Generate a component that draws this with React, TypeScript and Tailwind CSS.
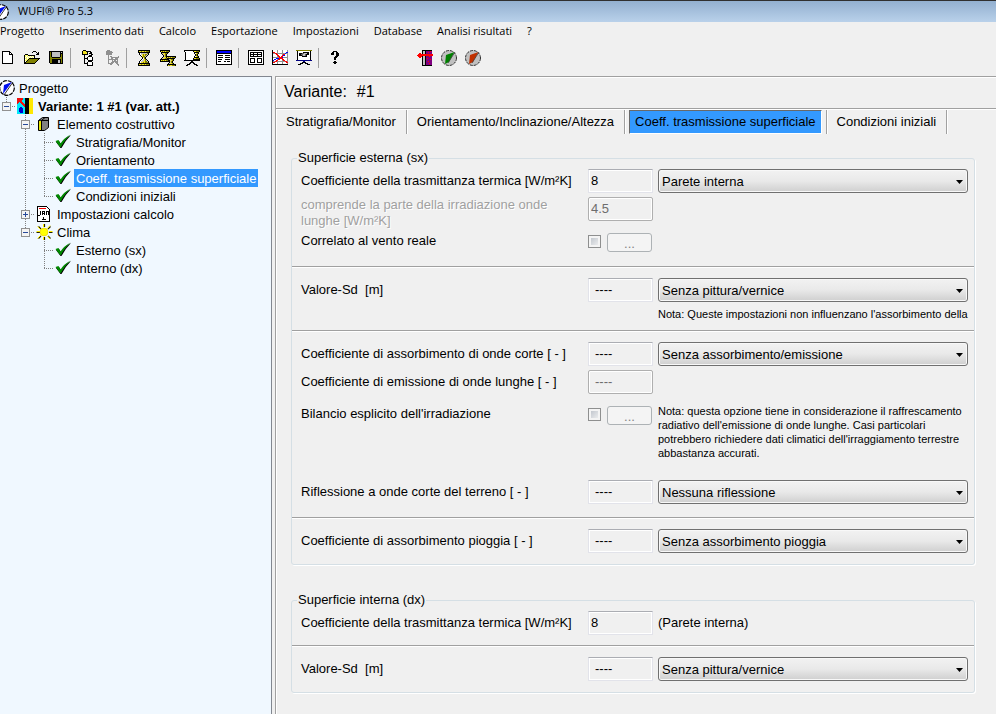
import { ReactNode, useState } from "react";
import clsx from "clsx";

const palette: Record<string, string> = {
  "#": "#000000",
  w: "#ffffff",
  y: "#ffff66",
  Y: "#f0e020",
  o: "#808000",
  g: "#909090",
  s: "#c0c0c0",
  d: "#606060",
  b: "#0000ff",
  n: "#000080",
  r: "#ff0000",
  p: "#800080",
};

// small bitmap icons, one character per pixel
function Pixels({ rows }: { rows: string[] }) {
  return (
    <svg width="16" height="16" viewBox="0 0 16 16" shapeRendering="crispEdges">
      {rows.map((row, y) =>
        row
          .split("")
          .map((c, x) =>
            palette[c] ? (
              <rect key={x + "-" + y} x={x} y={y} width="1" height="1" fill={palette[c]} />
            ) : null
          )
      )}
    </svg>
  );
}

const newIcon = [
  "................",
  "..########......",
  "..#wwwwww##.....",
  "..#wwwwww#w#....",
  "..#wwwwww####...",
  "..#wwwwwwwww#...",
  "..#wwwwwwwww#...",
  "..#wwwwwwwww#...",
  "..#wwwwwwwww#...",
  "..#wwwwwwwww#...",
  "..#wwwwwwwww#...",
  "..#wwwwwwwww#...",
  "..#wwwwwwwww#...",
  "..###########...",
];

const openIcon = [
  "................",
  ".........###....",
  "........#...#.#.",
  ".............##.",
  ".###........###.",
  "#yyy#######.....",
  "#ywywywywy#.....",
  "#wywywywyw#.....",
  "#yywy###########",
  "#wyy#ooooooooo#.",
  "#yy#ooooooooo#..",
  "#w#ooooooooo#...",
  "##ooooooooo#....",
  "###########.....",
];

const saveIcon = [
  "................",
  ".##############.",
  ".#o#ssssssss#s#.",
  ".#o#ssssssss###.",
  ".#o#ssssssss#o#.",
  ".#o#ssssssss#o#.",
  ".#o#ssssssss#o#.",
  ".#oo########oo#.",
  ".#oooooooooooo#.",
  ".#oo#########o#.",
  ".#oo######ss#o#.",
  ".#oo######ss#o#.",
  ".#oo######ss#o#.",
  "..#############.",
];

const treeIcon = [
  "...###..........",
  "..#YYY#####.....",
  "..#YYYY#..##....",
  "..#YYYY#.###....",
  "..######...##...",
  "....#....###....",
  "....#...####....",
  "....#..#wwww#...",
  "....####wwww#...",
  "....#..#wwww#...",
  "....#...#####...",
  "....#...####....",
  "....#..#wwww#...",
  "....####wwww#...",
  ".......#wwww#...",
  ".......######...",
];

const treeOffIcon = [
  "...ggg..........",
  "..gggggg........",
  "..ggggggg.......",
  "..gggggg........",
  "..gggggg........",
  "....g...........",
  "....g.gg......g.",
  "....g..gggggggg.",
  "....g..gg.wggg..",
  "....gggggggggg..",
  "....g...g.gg.g..",
  "....g...gggggg..",
  "....g..ggg.ggg..",
  "....ggggg...gg..",
  "......gg.....gg.",
  "..............g.",
];

const hourglassIcon = [
  "..############..",
  "..#YYoYYoYooo#..",
  "..############..",
  "...#wsssssso#...",
  "...#wsYoYoos#...",
  "....#wYoYos#....",
  ".....#Yoos#.....",
  "......#Yo#......",
  "......#wo#......",
  ".....#wsYo#.....",
  "....#wssYos#....",
  "...#wssYYoos#...",
  "...#wYYoYooo#...",
  "..############..",
  "..#YYoYYoYooo#..",
  "..############..",
];

const hourglassesIcon = [
  "##########......",
  "#YoYoYooo#......",
  ".########.......",
  ".#sYYoo#........",
  "..#sYo#.........",
  "...#Yo#.........",
  "...#so##########",
  "..#sYY#YoYoYooo#",
  ".#sYYoo########.",
  "#########sYoo#..",
  "#YoYoYoo##sYo#..",
  "##########Yo#...",
  ".........#so#...",
  "........#sYYo#..",
  ".......#########",
  ".......#YoYYooo#",
];

const screenIcon = [
  "################",
  "#wwwwwwww#YYooo#",
  ".#wwwwwwww#####.",
  ".#wwwwwwww#wYo#.",
  ".#wwwwwwwww#o#..",
  ".#wwwwwwwww#o#..",
  ".#wwwwwwww#wYo#.",
  ".#wwwwwwww#####.",
  ".#wwwwwww#YYooo#",
  ".#wwwwwww#######",
  "################",
  ".......##.......",
  "......####......",
  ".....##..##.....",
  "...###....###...",
  "..##........##..",
];

const dialogIcon = [
  "################",
  "#bbbbbbbbbbbbbb#",
  "#bbbbbbbbbbbbbb#",
  "################",
  "#wwwwwwwwwwwwww#",
  "#w#####ww#####w#",
  "#wwwwwwwwwwwwww#",
  "#w#####ww#####w#",
  "#wwwwwwwwwwwwww#",
  "#w####www#####w#",
  "#wwwwwwwwwwwwww#",
  "#w###www##w###w#",
  "#wwwwwwwwwwwwww#",
  "#wwwwwwwwwwwwww#",
  "################",
];

const gridIcon = [
  "################",
  "#wwwwwwwwwwwwww#",
  "#w############w#",
  "#w#ww#www#www#w#",
  "#w############w#",
  "#w#ww#www#www#w#",
  "#w############w#",
  "#wwwwwwwwwwwwww#",
  "#w#####ww#####w#",
  "#w#www#ww#www#w#",
  "#w#www#ww#www#w#",
  "#w#www#ww#www#w#",
  "#w#####ww#####w#",
  "#wwwwwwwwwwwwww#",
  "################",
];

const chartIcon = [
  "#wwwwgwwwwgwwwwg",
  "#wwwwgwwwwgwwwwg",
  "#rrwwgwwwwgwwwbb",
  "#ggrrggggggggbgg",
  "#wwwrrwwwwgrrwwg",
  "#wwwwrrwwwrbbwwg",
  "#wwwwgrrwrrwwwwg",
  "#ggggggrrrbggggg",
  "#wwwbbbrrrrwwwwg",
  "#wbbwgrrwwrrwwwg",
  "#bwwrrwwwwgrrwwg",
  "#ggrrggggggggrrg",
  "#rrwwgwwwwgwwwrr",
  "#wwwwgwwwwgwwwwg",
  "################",
];

const presentIcon = [
  "oooooooooooooooo",
  ".#wwwwwwwwwwww#.",
  ".#wwwww######w#.",
  ".#w###ddsss##w#.",
  ".#w##ddssd###w#.",
  ".#w###dssd#www#.",
  ".#wwww#####www#.",
  ".#wwwwwwwwwwww#.",
  ".#wwwwwwwwwwww#.",
  ".#wwwwwwwwwwww#.",
  "nnnnnnnnnnnnnnnn",
  ".......nn.......",
  "......####......",
  "....###..###....",
  "..###......###..",
];

const helpIcon = [
  "................",
  ".....####.......",
  "....##..##......",
  "...###..###.....",
  "...###..###.....",
  "........###.....",
  ".......###......",
  "......###.......",
  "......##........",
  "......##........",
  "................",
  "......##........",
  ".....####.......",
  "......##........",
];

const wallIcon = [
  ".....##########.",
  ".....#ss#pppprp.",
  ".....#ss#pprppp.",
  "..rr.#ss#pppppp.",
  ".rrrrrrrrrrrrrrr",
  "rrrrrrrrrrrrrrrr",
  ".rrrr#ss#ppprpp.",
  "..rr.#ss#pppppp.",
  ".....#ss#prpppp.",
  ".....#ss#pppprp.",
  ".....#ss#pppppp.",
  ".....#ss#pprppp.",
  ".....#ss#pppppp.",
  ".....#ss#ppprpp.",
  ".....#ss#pppppp.",
  ".....##########.",
];

function Gauge({ color }: { color: string }) {
  return (
    <svg width="16" height="16" viewBox="0 0 16 16">
      <circle cx="8" cy="8" r="7.5" fill="#c0c0c0" stroke="#303030" strokeDasharray="3 1" />
      <path d="M13.500 2L5 5L4 14L8 12Z" fill={color} />
      <path d="M14 2L7 13" stroke="#404040" strokeWidth="0.8" />
    </svg>
  );
}

function Logo({ size }: { size: number }) {
  return (
    <svg width={size} height={size} viewBox="0 0 16 16" className="shrink-0">
      <circle cx="8" cy="8" r="7.3" fill="#fff" stroke="#000" strokeWidth="1.2" strokeDasharray="4 1" />
      <path d="M13 2L5 5L4 14Z" fill="#0010f0" />
      <path d="M14 2L5 15" stroke="#000" strokeWidth="0.8" />
    </svg>
  );
}

const toolGroups = [
  [
    { name: "Nuovo", icon: <Pixels rows={newIcon} /> },
    { name: "Apri", icon: <Pixels rows={openIcon} /> },
    { name: "Salva", icon: <Pixels rows={saveIcon} /> },
  ],
  [
    { name: "Nuova variante", icon: <Pixels rows={treeIcon} /> },
    { name: "Elimina variante", icon: <Pixels rows={treeOffIcon} /> },
  ],
  [
    { name: "Calcola", icon: <Pixels rows={hourglassIcon} /> },
    { name: "Calcola tutto", icon: <Pixels rows={hourglassesIcon} /> },
    { name: "Calcola con film", icon: <Pixels rows={screenIcon} /> },
  ],
  [{ name: "Riepilogo", icon: <Pixels rows={dialogIcon} /> }],
  [
    { name: "Tabella", icon: <Pixels rows={gridIcon} /> },
    { name: "Grafico", icon: <Pixels rows={chartIcon} /> },
    { name: "Film", icon: <Pixels rows={presentIcon} /> },
  ],
  [{ name: "Aiuto", icon: <Pixels rows={helpIcon} /> }],
];

const extraTools = [
  { name: "Parete", icon: <Pixels rows={wallIcon} /> },
  { name: "Verde", icon: <Gauge color="#008000" /> },
  { name: "Rosso", icon: <Gauge color="#c03000" /> },
];

const menus = [
  "Progetto",
  "Inserimento dati",
  "Calcolo",
  "Esportazione",
  "Impostazioni",
  "Database",
  "Analisi risultati",
  "?",
];

function ToolButton({ name, icon }: { name: string; icon: ReactNode }) {
  return (
    <button type="button" aria-label={name} className="flex h-6 w-6 items-center justify-center">
      {icon}
    </button>
  );
}

/* ---------- tree ---------- */

const Check = () => (
  <svg width="19" height="18" viewBox="0 0 19 18">
    <path d="M2 9L5 8L7 11Q11 5 17 2Q11 8 7.5 15H6.5Z" fill="#000" />
    <path d="M1.500 8L4.500 7L6.500 10.500Q10 5 16.500 1.500Q10 8 7 14H6Z" fill="#008a00" />
  </svg>
);

const VariantIcon = () => (
  <svg width="19" height="18" viewBox="0 0 19 18" shapeRendering="crispEdges">
    <rect x="1" y="1" width="8" height="16" fill="#00e8f8" />
    <rect x="9" y="1" width="4" height="16" fill="#000" />
    <rect x="13" y="1" width="4" height="16" fill="#ffe800" />
    <path d="M1 1H7V2L5 4L9 8V10H8L3 5L1 7Z" fill="#f01010" />
    <path d="M5 9L7 12V15L6 16H4L3 15V12Z" fill="#0000d0" />
  </svg>
);

const WallBlock = () => (
  <svg width="19" height="18" viewBox="0 0 19 18">
    <path d="M3.500 5.500L7.500 2.500H13.500V12.500L9.500 15.500H3.500Z" fill="#808080" stroke="#000" />
    <path d="M4 6H6V15H4Z" fill="#e8e800" />
    <path d="M6.500 5.500H13M6.500 5V15.500M3.500 5.500L6 5M6.500 5.500L10 2.500" fill="none" stroke="#000" />
    <path d="M7 6H12V13L9 15H7Z" fill="#808080" />
  </svg>
);

const Calendar = () => (
  <svg width="19" height="18" viewBox="0 0 19 18" shapeRendering="crispEdges">
    <path d="M2.500 1.500H11.500L14.500 4.500V16.500H2.500Z" fill="#fff" stroke="#000" />
    <path d="M4 3H11V4H4Z" fill="#f00000" />
    <path
      d="M3 10h2M5.500 6v4M7.500 10V6h2v4M7.500 8h2M11.500 10V6M11 6.500h3M13.500 6v4M8 12.500h1M8.500 12v3M7 14.500h4"
      stroke="#000"
      fill="none"
    />
  </svg>
);

const Sun = () => (
  <svg width="19" height="18" viewBox="0 0 19 18">
    <path
      d="M9.500 1V4M9.500 14V17M1.500 9.500H5M14 9.500H17.500M3.500 3.500L6 6M13 13L15.500 15.500M15.500 3.500L13 6M6 13L3.500 15.500"
      stroke="#202000"
      strokeWidth="1.200"
    />
    <path
      d="M8.500 1V4M8.500 14V17M1.500 8.500H5M14 8.500H17.500M2.500 3.500L5.500 6.500M12.500 13L15 16M15 2.500L12.500 5.500M5.500 12.500L2.500 15.500"
      stroke="#ffee00"
    />
    <circle cx="9" cy="9" r="4" fill="#ffff00" stroke="#e8c800" strokeWidth="0.600" />
  </svg>
);

type Guide = "blank" | "line" | "tee" | "end" | "minus" | "minusEnd" | "plus";

function GuideCell({ kind }: { kind: Guide }) {
  const box = kind === "minus" || kind === "minusEnd" || kind === "plus";
  const through = kind === "line" || kind === "tee" || kind === "minus" || kind === "plus";
  return (
    <svg width="19" height="18" viewBox="0 0 19 18" className="shrink-0" shapeRendering="crispEdges">
      {kind !== "blank" && (
        <path d={through ? "M9.500 0V18" : "M9.500 0V10"} stroke="#808080" strokeDasharray="1 1" />
      )}
      {kind !== "blank" && kind !== "line" && (
        <path d="M9 9.500H19" stroke="#808080" strokeDasharray="1 1" />
      )}
      {box && (
        <>
          <rect x="5.500" y="5.500" width="8" height="8" fill="#f4f4f4" stroke="#919191" />
          <path d="M7 9.500H12" stroke="#284a9a" />
          {kind === "plus" && <path d="M9.500 7V12" stroke="#284a9a" />}
        </>
      )}
    </svg>
  );
}

const treeItems: { label: string; guides: Guide[]; icon: ReactNode; bold?: boolean }[] = [
  {
    label: "Progetto",
    guides: [],
    icon: (
      <span className="flex w-[19px] justify-center">
        <Logo size={16} />
      </span>
    ),
  },
  { label: "Variante: 1 #1 (var. att.)", guides: ["minusEnd"], icon: <VariantIcon />, bold: true },
  { label: "Elemento costruttivo", guides: ["blank", "minus"], icon: <WallBlock /> },
  { label: "Stratigrafia/Monitor", guides: ["blank", "line", "tee"], icon: <Check /> },
  { label: "Orientamento", guides: ["blank", "line", "tee"], icon: <Check /> },
  { label: "Coeff. trasmissione superficiale", guides: ["blank", "line", "tee"], icon: <Check /> },
  { label: "Condizioni iniziali", guides: ["blank", "line", "end"], icon: <Check /> },
  { label: "Impostazioni calcolo", guides: ["blank", "plus"], icon: <Calendar /> },
  { label: "Clima", guides: ["blank", "minusEnd"], icon: <Sun /> },
  { label: "Esterno (sx)", guides: ["blank", "blank", "tee"], icon: <Check /> },
  { label: "Interno (dx)", guides: ["blank", "blank", "end"], icon: <Check /> },
];

function Tree() {
  const [selected, setSelected] = useState("Coeff. trasmissione superficiale");
  return (
    <nav className="w-[272px] shrink-0 overflow-hidden border-t border-r border-[#828790] bg-[#f0f8ff] pt-[2px]">
      <ul className="-ml-[3px]">
        {treeItems.map((item) => (
          <li key={item.label} className="flex h-[18px] items-center">
            {item.guides.map((g, i) => (
              <GuideCell key={i} kind={g} />
            ))}
            {item.icon}
            <button
              type="button"
              onClick={() => setSelected(item.label)}
              className={clsx(
                "ml-px h-[18px] px-[2px] pt-px leading-[17px] whitespace-nowrap",
                item.bold && "font-bold",
                selected === item.label && "bg-[#3399ff] text-white"
              )}
            >
              {item.label}
            </button>
          </li>
        ))}
      </ul>
    </nav>
  );
}

/* ---------- form ---------- */

function Row({ children, start }: { children: ReactNode; start?: boolean }) {
  return (
    <div
      className={clsx(
        "grid grid-cols-[287px_65px_minmax(0,1fr)] pr-[6px] pl-[9px]",
        start ? "items-start" : "items-center"
      )}
    >
      {children}
    </div>
  );
}

function Field({ id, value, disabled }: { id: string; value: string; disabled?: boolean }) {
  return (
    <input
      id={id}
      type="text"
      defaultValue={value}
      disabled={disabled}
      className={clsx(
        "h-6 w-full border bg-[#f0f0f0] pb-px shadow-[inset_0_0_0_1px_#ffffff] outline-none",
        value === "----" ? "pl-[6px]" : "pl-[2px]",
        disabled
          ? "rounded-xs border-[#afafaf] text-[#6d6d6d]"
          : "border-[#e2e3ea] border-t-[#abadb3]"
      )}
    />
  );
}

function Select({ label, value }: { label: string; value: string }) {
  return (
    <div className="relative ml-[5px]">
      <select
        aria-label={label}
        className="block h-6 w-full appearance-none rounded-[3px] border border-[#707070] bg-linear-to-b from-[#f2f2f2] from-0% via-[#e9e9e9] via-50% to-[#cfcfcf] to-100% pt-px pr-5 pl-[3px] shadow-[inset_0_0_0_1px_#f8f8f8] outline-none"
      >
        <option>{value}</option>
      </select>
      <svg
        width="7"
        height="4"
        viewBox="0 0 7 4"
        className="pointer-events-none absolute top-[11px] right-[5px]"
      >
        <path d="M0 0H7L3.500 4Z" fill="#000" />
      </svg>
    </div>
  );
}

function Toggle({ id }: { id: string }) {
  return (
    <div className="flex items-start justify-between pr-px">
      <input
        id={id}
        type="checkbox"
        className="mt-[2px] h-[13px] w-[13px] appearance-none border border-[#8e8f8f] bg-linear-to-br from-[#b8bec6] to-[#f6f6f6] shadow-[inset_0_0_0_2px_#f4f4f4] checked:bg-[#3399ff]"
      />
      <button
        type="button"
        disabled
        className="h-[19px] w-[45px] rounded-[3px] border border-[#adb2b5] bg-[#f4f4f4] text-[#838383]"
      >
        ...
      </button>
    </div>
  );
}

const Divider = () => <hr className="h-[2px] border-t border-b border-t-[#a0a0a0] border-b-white" />;

function Group({ title, children }: { title: string; children: ReactNode }) {
  return (
    <fieldset className="min-w-0 rounded-[3px] border border-[#d5dfe5] shadow-[1px_1px_0_#ffffff]">
      <legend className="ml-[5px] h-4 px-px leading-4">{title}</legend>
      {children}
    </fieldset>
  );
}

const tabs = [
  "Stratigrafia/Monitor",
  "Orientamento/Inclinazione/Altezza",
  "Coeff. trasmissione superficiale",
  "Condizioni iniziali",
];

function Tabs() {
  const [active, setActive] = useState(tabs[2]);
  return (
    <div role="tablist" className="flex h-6">
      {tabs.map((tab) => (
        <div key={tab} className="flex border-r border-[#a0a0a0] px-1 shadow-[1px_0_0_#ffffff]">
          <button
            type="button"
            role="tab"
            aria-selected={active === tab}
            onClick={() => setActive(tab)}
            className={clsx(
              "h-6 border px-[5px] whitespace-nowrap",
              active === tab
                ? "border-t-[#696969] border-r-white border-b-white border-l-[#696969] bg-[#3399ff]"
                : "border-transparent"
            )}
          >
            {tab}
          </button>
        </div>
      ))}
    </div>
  );
}

export default function App() {
  return (
    <div className="flex min-h-screen flex-col overflow-hidden bg-[#f0f0f0] font-['Liberation_Sans',Arial,sans-serif] text-[13px] text-black">
      <header className="font-['Open_Sans','Noto_Sans',sans-serif] text-[11px]">
        <div className="flex h-[22px] items-center gap-[9px] border-t border-[#303030] bg-linear-to-b from-[#93b0d0] to-[#b9d1ea]">
          <span className="-ml-[7px]">
            <Logo size={16} />
          </span>
          <h1>WUFI® Pro 5.3</h1>
        </div>
        <nav className="flex h-[18px] items-center gap-[15px]">
          {menus.map((m) => (
            <button key={m} type="button">
              {m}
            </button>
          ))}
        </nav>
      </header>

      <div className="-ml-1 flex h-9 items-center">
        {toolGroups.map((group, i) => (
          <div key={i} className="flex items-center">
            {i > 0 && <span className="mr-[5px] ml-[2px] h-5 w-px bg-[#a0a0a0]" />}
            {group.map((t) => (
              <ToolButton key={t.name} name={t.name} icon={t.icon} />
            ))}
          </div>
        ))}
        <div className="ml-[65px] flex">
          {extraTools.map((t) => (
            <ToolButton key={t.name} name={t.name} icon={t.icon} />
          ))}
        </div>
      </div>

      <div className="flex flex-1 gap-[3px]">
        <Tree />
        <main className="min-w-0 flex-1 border-t border-l border-[#a0a0a0] shadow-[inset_1px_1px_0_#ffffff]">
          <h2 className="flex h-[31px] items-center gap-[10px] pb-[2px] pl-2 text-base">
            <span>Variante:</span>
            <span>#1</span>
          </h2>
          <Divider />
          <Tabs />
          <div className="mt-4 mr-[21px] ml-[15px] flex flex-col gap-[27px]">
            <Group title="Superficie esterna (sx)">
              <div className="flex flex-col gap-1 pt-[3px] pb-[13px]">
                <Row>
                  <label htmlFor="alpha-ext">Coefficiente della trasmittanza termica [W/m²K]</label>
                  <Field id="alpha-ext" value="8" />
                  <Select label="Tipo di parete" value="Parete interna" />
                </Row>
                <Row start>
                  <label
                    htmlFor="alpha-rad"
                    className="w-[260px] leading-4 text-[#a0a0a0] [text-shadow:1px_1px_0_#ffffff]"
                  >
                    comprende la parte della irradiazione onde lunghe [W/m²K]
                  </label>
                  <Field id="alpha-rad" value="4.5" disabled />
                </Row>
                <Row start>
                  <label htmlFor="wind" className="h-5 leading-4">
                    Correlato al vento reale
                  </label>
                  <Toggle id="wind" />
                </Row>
              </div>
              <Divider />
              <div className="flex flex-col gap-1 pt-[10px] pb-2">
                <Row>
                  <label htmlFor="sd-ext" className="whitespace-pre">
                    {"Valore-Sd  [m]"}
                  </label>
                  <Field id="sd-ext" value="----" />
                  <Select label="Pittura esterna" value="Senza pittura/vernice" />
                </Row>
                <Row>
                  <p className="col-start-3 -mr-1 ml-[5px] text-[11px] leading-4 whitespace-nowrap">
                    Nota: Queste impostazioni non influenzano l'assorbimento della
                  </p>
                </Row>
              </div>
              <Divider />
              <div className="flex flex-col pt-[10px] pb-[13px]">
                <Row>
                  <label htmlFor="short">Coefficiente di assorbimento di onde corte [ - ]</label>
                  <Field id="short" value="----" />
                  <Select label="Assorbimento" value="Senza assorbimento/emissione" />
                </Row>
                <div className="mt-1 mb-[10px]">
                  <Row>
                    <label htmlFor="long">Coefficiente di emissione di onde lunghe [ - ]</label>
                    <Field id="long" value="----" disabled />
                  </Row>
                </div>
                <Row start>
                  <label htmlFor="balance" className="leading-5">
                    Bilancio esplicito dell'irradiazione
                  </label>
                  <div className="pt-[2px]">
                    <Toggle id="balance" />
                  </div>
                  <p className="ml-[5px] text-[11px] leading-[14px]">
                    Nota: questa opzione tiene in considerazione il raffrescamento radiativo
                    dell'emissione di onde lunghe. Casi particolari potrebbero richiedere dati
                    climatici dell'irraggiamento terrestre abbastanza accurati.
                  </p>
                </Row>
                <div className="mt-5">
                  <Row>
                    <label htmlFor="ground">Riflessione a onde corte del terreno [ - ]</label>
                    <Field id="ground" value="----" />
                    <Select label="Riflessione" value="Nessuna riflessione" />
                  </Row>
                </div>
              </div>
              <Divider />
              <div className="pt-[10px] pb-[11px]">
                <Row>
                  <label htmlFor="rain">Coefficiente di assorbimento pioggia [ - ]</label>
                  <Field id="rain" value="----" />
                  <Select label="Pioggia" value="Senza assorbimento pioggia" />
                </Row>
              </div>
            </Group>

            <Group title="Superficie interna (dx)">
              <div className="pt-[3px] pb-[10px]">
                <Row>
                  <label htmlFor="alpha-int">Coefficiente della trasmittanza termica [W/m²K]</label>
                  <Field id="alpha-int" value="8" />
                  <span className="ml-[5px]">(Parete interna)</span>
                </Row>
              </div>
              <Divider />
              <div className="pt-[10px] pb-[11px]">
                <Row>
                  <label htmlFor="sd-int" className="whitespace-pre">
                    {"Valore-Sd  [m]"}
                  </label>
                  <Field id="sd-int" value="----" />
                  <Select label="Pittura interna" value="Senza pittura/vernice" />
                </Row>
              </div>
            </Group>
          </div>
        </main>
      </div>
    </div>
  );
}
